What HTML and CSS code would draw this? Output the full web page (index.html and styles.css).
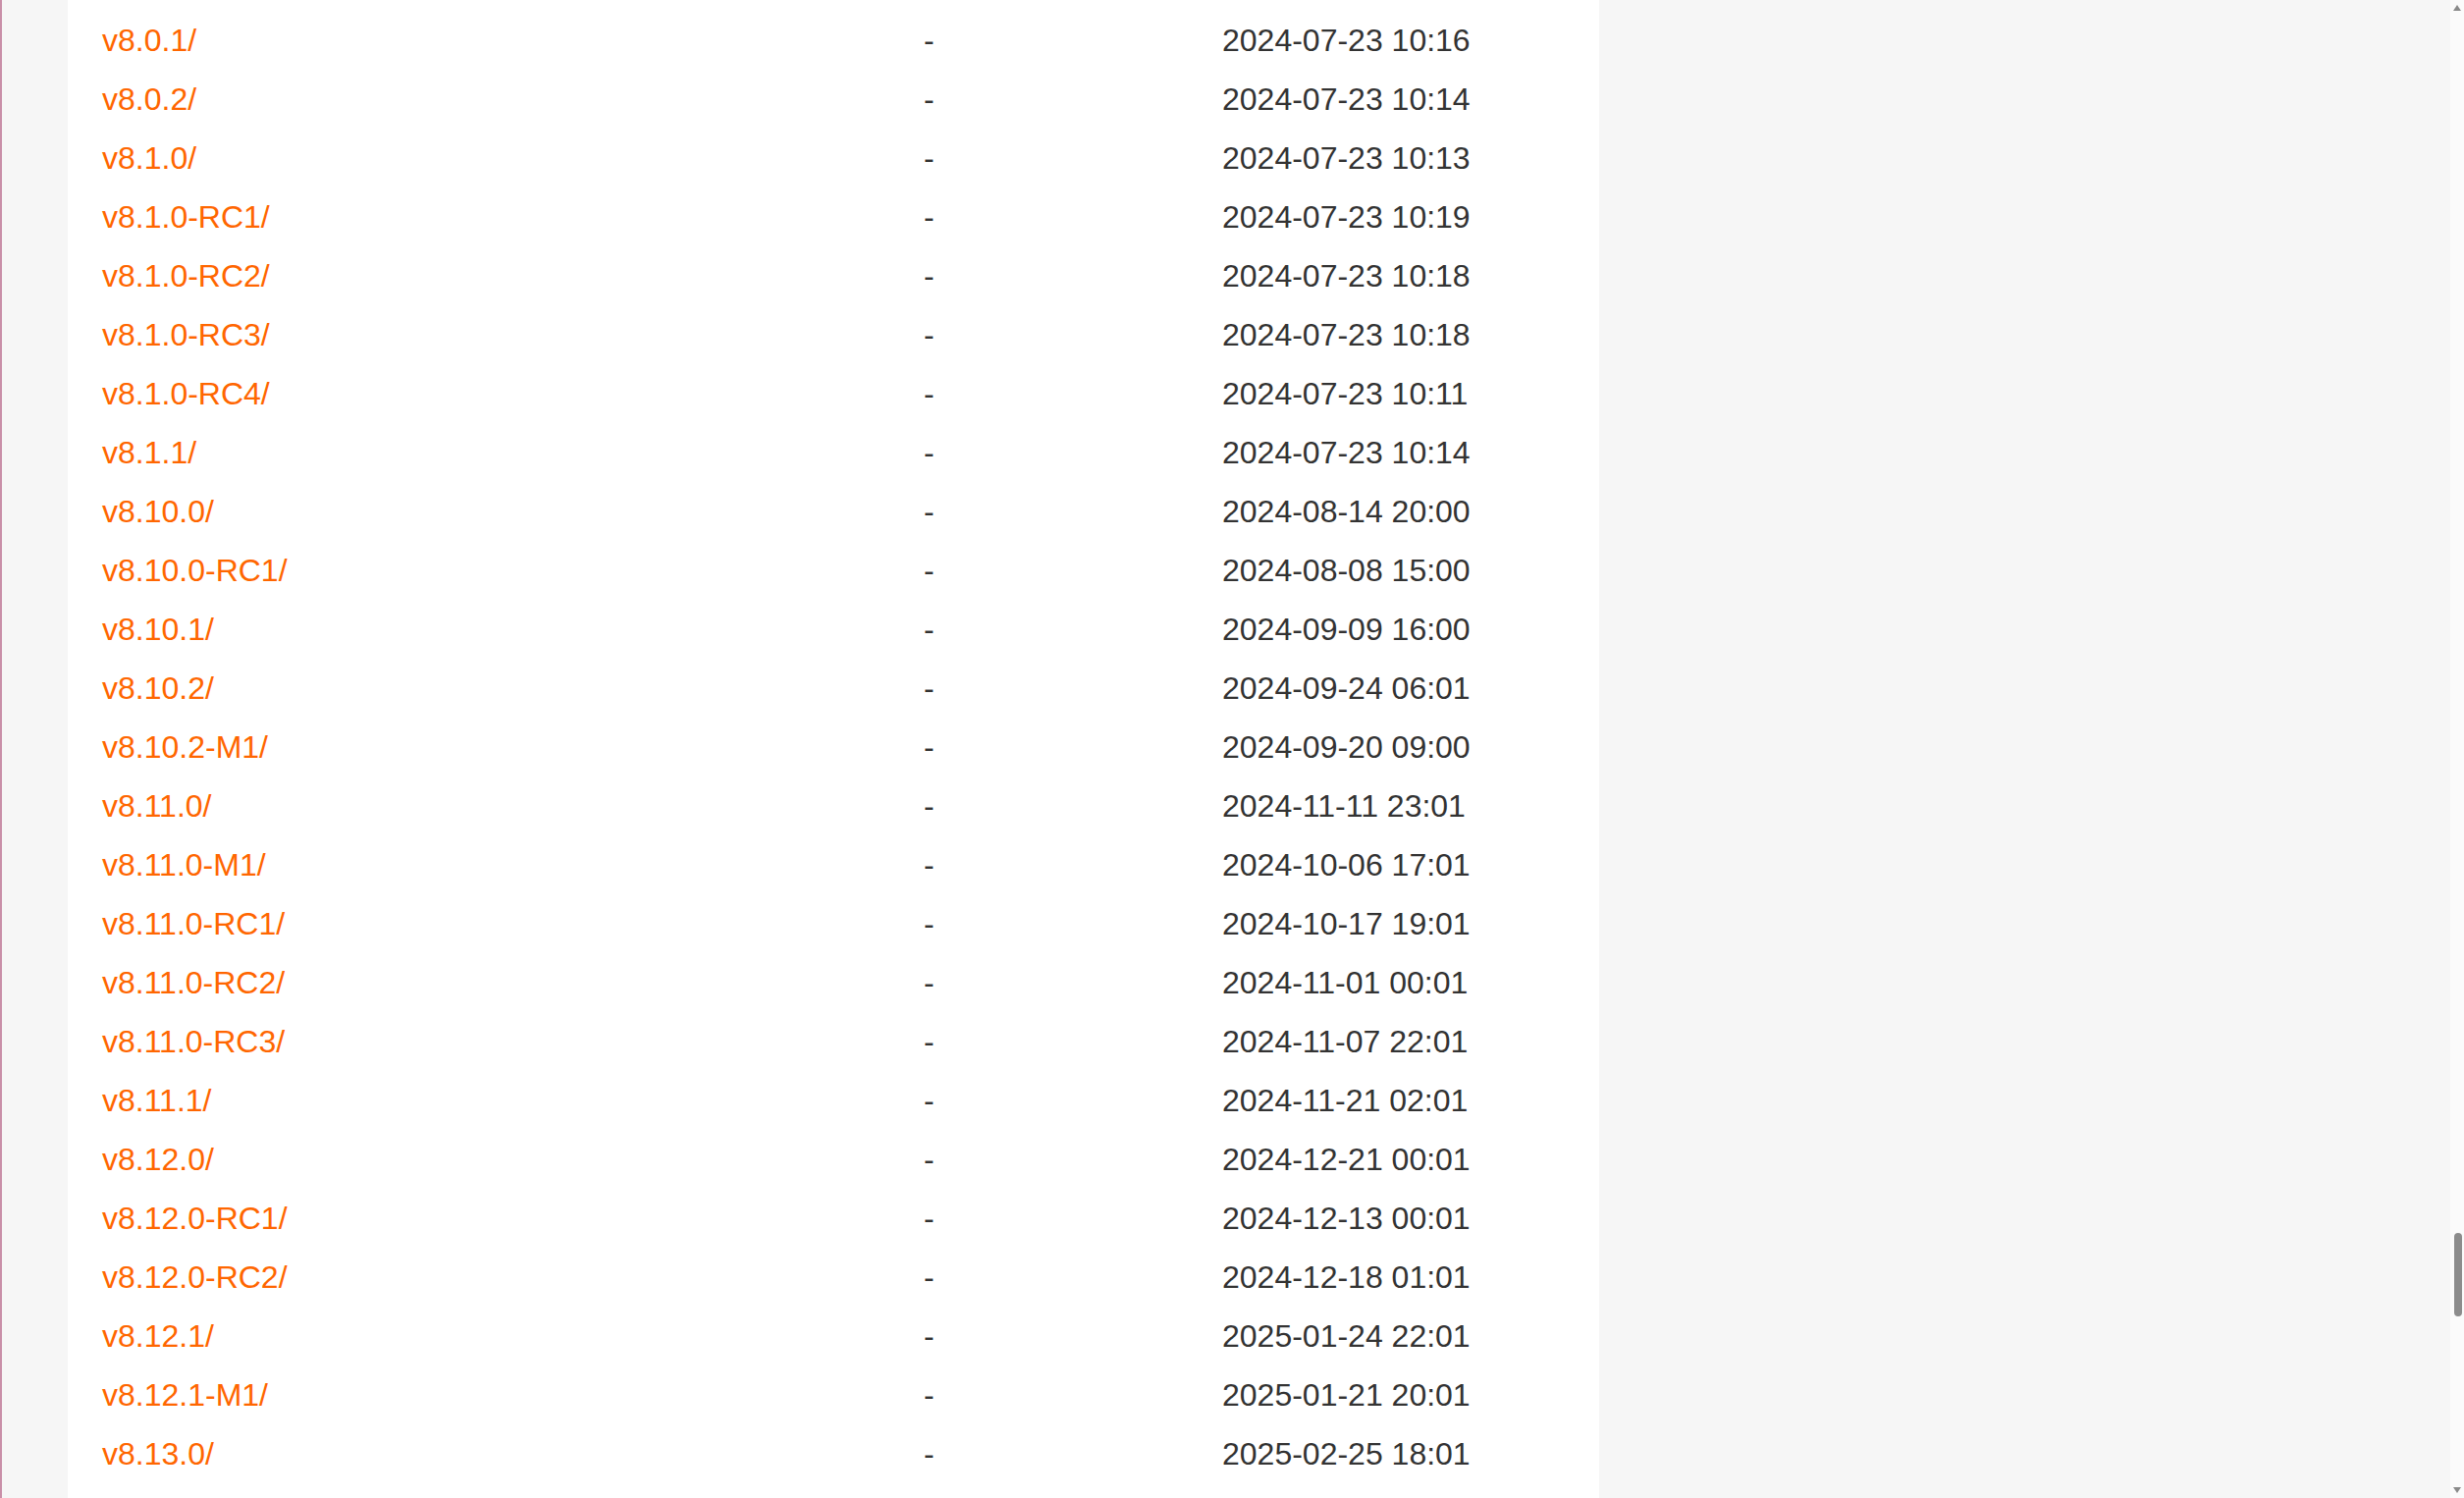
FILE: index.html
```html
<!DOCTYPE html>
<html>
<head>
<meta charset="utf-8">
<title>Index</title>
<link rel="stylesheet" href="styles.css">
</head>
<body>
<div class="frame">
  <div class="gutter"></div>
  <main class="panel">
    <div class="listing">
      <a class="name" href="#">v8.0.1/</a><span class="size">-</span><span class="date">2024-07-23 10:16</span>
      <a class="name" href="#">v8.0.2/</a><span class="size">-</span><span class="date">2024-07-23 10:14</span>
      <a class="name" href="#">v8.1.0/</a><span class="size">-</span><span class="date">2024-07-23 10:13</span>
      <a class="name" href="#">v8.1.0-RC1/</a><span class="size">-</span><span class="date">2024-07-23 10:19</span>
      <a class="name" href="#">v8.1.0-RC2/</a><span class="size">-</span><span class="date">2024-07-23 10:18</span>
      <a class="name" href="#">v8.1.0-RC3/</a><span class="size">-</span><span class="date">2024-07-23 10:18</span>
      <a class="name" href="#">v8.1.0-RC4/</a><span class="size">-</span><span class="date">2024-07-23 10:11</span>
      <a class="name" href="#">v8.1.1/</a><span class="size">-</span><span class="date">2024-07-23 10:14</span>
      <a class="name" href="#">v8.10.0/</a><span class="size">-</span><span class="date">2024-08-14 20:00</span>
      <a class="name" href="#">v8.10.0-RC1/</a><span class="size">-</span><span class="date">2024-08-08 15:00</span>
      <a class="name" href="#">v8.10.1/</a><span class="size">-</span><span class="date">2024-09-09 16:00</span>
      <a class="name" href="#">v8.10.2/</a><span class="size">-</span><span class="date">2024-09-24 06:01</span>
      <a class="name" href="#">v8.10.2-M1/</a><span class="size">-</span><span class="date">2024-09-20 09:00</span>
      <a class="name" href="#">v8.11.0/</a><span class="size">-</span><span class="date">2024-11-11 23:01</span>
      <a class="name" href="#">v8.11.0-M1/</a><span class="size">-</span><span class="date">2024-10-06 17:01</span>
      <a class="name" href="#">v8.11.0-RC1/</a><span class="size">-</span><span class="date">2024-10-17 19:01</span>
      <a class="name" href="#">v8.11.0-RC2/</a><span class="size">-</span><span class="date">2024-11-01 00:01</span>
      <a class="name" href="#">v8.11.0-RC3/</a><span class="size">-</span><span class="date">2024-11-07 22:01</span>
      <a class="name" href="#">v8.11.1/</a><span class="size">-</span><span class="date">2024-11-21 02:01</span>
      <a class="name" href="#">v8.12.0/</a><span class="size">-</span><span class="date">2024-12-21 00:01</span>
      <a class="name" href="#">v8.12.0-RC1/</a><span class="size">-</span><span class="date">2024-12-13 00:01</span>
      <a class="name" href="#">v8.12.0-RC2/</a><span class="size">-</span><span class="date">2024-12-18 01:01</span>
      <a class="name" href="#">v8.12.1/</a><span class="size">-</span><span class="date">2025-01-24 22:01</span>
      <a class="name" href="#">v8.12.1-M1/</a><span class="size">-</span><span class="date">2025-01-21 20:01</span>
      <a class="name" href="#">v8.13.0/</a><span class="size">-</span><span class="date">2025-02-25 18:01</span>
    </div>
  </main>
  <div class="filler"></div>
  <div class="scrollbar">
    <div class="arrow-up"></div>
    <div class="track-top"></div>
    <div class="thumb"></div>
    <div class="track-bottom"></div>
    <div class="arrow-down"></div>
  </div>
</div>
</body>
</html>
```

FILE: styles.css
```css
html, body {
  margin: 0;
  padding: 0;
  height: 100%;
  overflow: hidden;
  background: #f6f6f6;
  font-family: "Liberation Sans", Arial, sans-serif;
}

.frame {
  display: flex;
  height: 1526px;
  border-left: 2px solid #c98fa8;
  box-sizing: border-box;
}

.gutter {
  width: 67px;
  flex: none;
}

.panel {
  width: 1560px;
  flex: none;
  background: #ffffff;
  padding-top: 11px;
  box-sizing: border-box;
  overflow: hidden;
}

.listing {
  display: grid;
  grid-template-columns: 837px 304px auto;
  padding-left: 35px;
  font-size: 32px;
  line-height: 60px;
  color: #333333;
}

.name {
  color: #ff6600;
  text-decoration: none;
  white-space: nowrap;
}

.size, .date {
  white-space: nowrap;
}

.filler {
  flex: 1;
}

.scrollbar {
  width: 14px;
  flex: none;
  background: #fbfbfb;
  display: flex;
  flex-direction: column;
  align-items: center;
}

.arrow-up {
  width: 0;
  height: 0;
  margin-top: 5px;
  border-left: 4px solid transparent;
  border-right: 4px solid transparent;
  border-bottom: 6px solid #8a8a8a;
}

.track-top {
  height: 1245px;
  flex: none;
}

.thumb {
  width: 8px;
  height: 85px;
  border-radius: 4px;
  background: #8c8c8c;
  margin-left: 1px;
}

.track-bottom {
  flex: 1;
}

.arrow-down {
  width: 0;
  height: 0;
  margin-bottom: 5px;
  border-left: 4px solid transparent;
  border-right: 4px solid transparent;
  border-top: 6px solid #8a8a8a;
}
```
